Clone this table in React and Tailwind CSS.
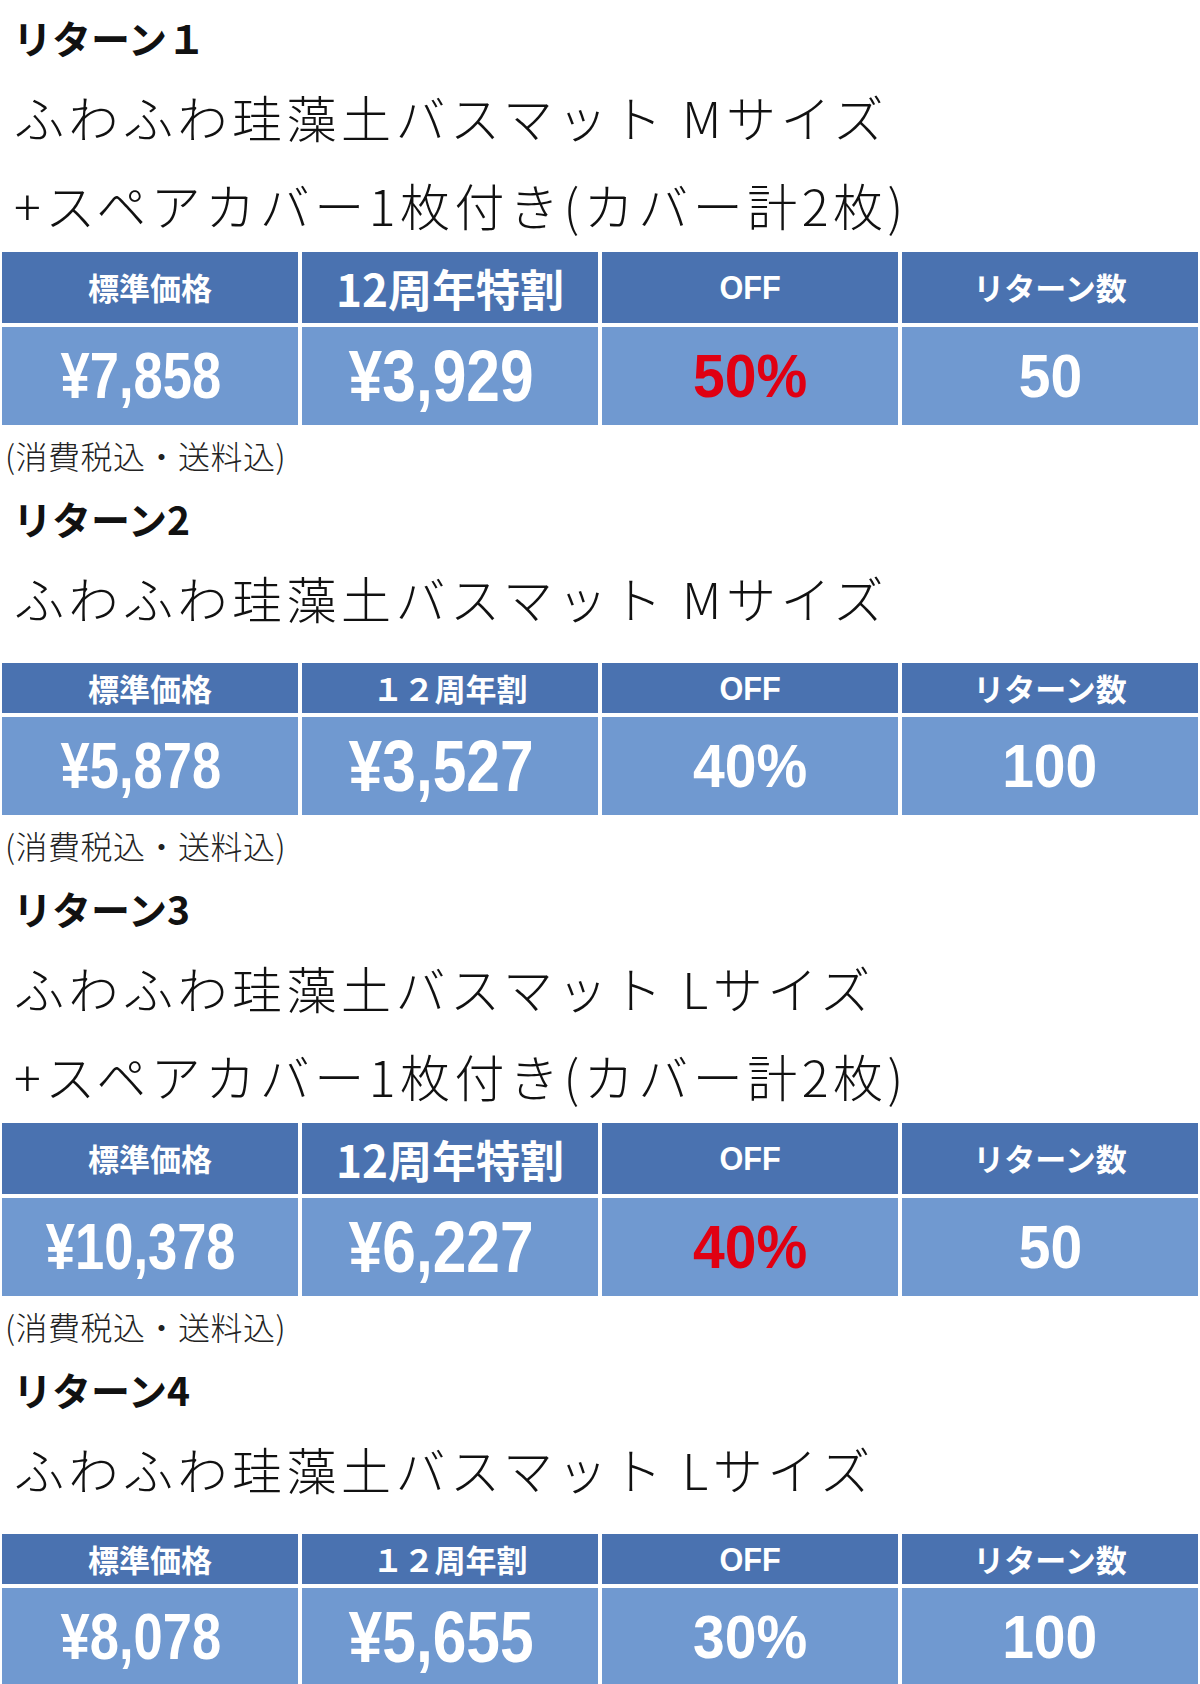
import React from 'react'

const returns = [
  {
    title: 'リターン１',
    lines: ['ふわふわ珪藻土バスマット Mサイズ', '+スペアカバー1枚付き(カバー計2枚)'],
    special: '12周年特割',
    big: true,
    price: '¥7,858',
    sale: '¥3,929',
    off: '50%',
    red: true,
    count: '50',
    note: true,
  },
  {
    title: 'リターン2',
    lines: ['ふわふわ珪藻土バスマット Mサイズ'],
    special: '１２周年割',
    big: false,
    price: '¥5,878',
    sale: '¥3,527',
    off: '40%',
    red: false,
    count: '100',
    note: true,
  },
  {
    title: 'リターン3',
    lines: ['ふわふわ珪藻土バスマット Lサイズ', '+スペアカバー1枚付き(カバー計2枚)'],
    special: '12周年特割',
    big: true,
    price: '¥10,378',
    sale: '¥6,227',
    off: '40%',
    red: true,
    count: '50',
    note: true,
  },
  {
    title: 'リターン4',
    lines: ['ふわふわ珪藻土バスマット Lサイズ'],
    special: '１２周年割',
    big: false,
    price: '¥8,078',
    sale: '¥5,655',
    off: '30%',
    red: false,
    count: '100',
    note: false,
  },
]

const jp = { fontFamily: '"Noto Sans CJK JP", "Noto Sans", sans-serif' }
const num = { fontFamily: '"Liberation Sans", "Noto Sans CJK JP", sans-serif' }

function HeadCell({ children, big }) {
  return (
    <div
      className={`flex items-center justify-center bg-[#4a72b0] text-white font-bold ${big ? 'text-[44px]' : 'text-[31px]'}`}
      style={jp}
    >
      {children}
    </div>
  )
}

// value cells: price columns use a squeezed, taller figure like the source image
function BodyCell({ children, red, kind }) {
  let size = 'text-[62px] scale-x-[0.92]'
  let pad = ''
  if (kind === 'price') {
    size = 'text-[64px] scale-x-[0.82]'
    pad = 'pr-[18px]'
  }
  if (kind === 'sale') {
    size = 'text-[72px] scale-x-[0.84]'
    pad = 'pr-[18px]'
  }
  return (
    <div className={`flex items-center justify-center bg-[#7099d0] overflow-hidden ${pad}`}>
      <span
        className={`inline-block font-bold leading-none ${size} ${red ? 'text-[#e00012]' : 'text-white'}`}
        style={num}
      >
        {children}
      </span>
    </div>
  )
}

function PriceTable({ r }) {
  return (
    <div
      className={`ml-[2px] w-[1196px] grid grid-cols-4 gap-[4px] ${r.big ? 'mt-[4px] grid-rows-[71px_98px]' : 'mt-[22px] grid-rows-[50px_98px]'}`}
    >
      <HeadCell>標準価格</HeadCell>
      <HeadCell big={r.big}>{r.special}</HeadCell>
      <HeadCell>
        <span className="inline-block text-[34px] scale-x-[0.9]" style={num}>OFF</span>
      </HeadCell>
      <HeadCell>リターン数</HeadCell>
      <BodyCell kind="price">{r.price}</BodyCell>
      <BodyCell kind="sale">{r.sale}</BodyCell>
      <BodyCell red={r.red}>{r.off}</BodyCell>
      <BodyCell>{r.count}</BodyCell>
    </div>
  )
}

export default function App() {
  return (
    <div className="w-[1200px] bg-white pt-[15px] text-[#111]" style={jp}>
      {returns.map((r, i) => (
        <section key={i} className={i > 0 ? 'mt-[21px]' : ''}>
          <h2 className="pl-[13px] h-[44px] leading-[44px] text-[39px] font-bold">{r.title}</h2>
          <div className="mt-[13px]">
            {r.lines.map((line, j) => (
              <p key={j} className="pl-[14px] h-[88px] leading-[88px] text-[50px] font-light tracking-[4.5px] whitespace-nowrap">
                {line}
              </p>
            ))}
          </div>
          <PriceTable r={r} />
          {r.note && (
            <p className="mt-[10px] pl-[5px] h-[40px] leading-[40px] text-[32px] tracking-[0.5px] font-light text-[#222]">(消費税込・送料込)</p>
          )}
        </section>
      ))}
    </div>
  )
}
